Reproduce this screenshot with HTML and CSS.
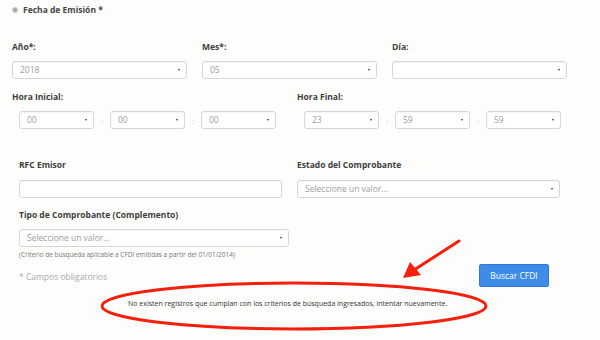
FILE: index.html
```html
<!DOCTYPE html>
<html>
<head>
<meta charset="utf-8">
<link rel="stylesheet" href="styles.css">
</head>
<body>
<div class="page">
  <div class="title"><span class="bullet"></span>Fecha de Emisión *</div>

  <div class="row3">
    <div class="field">
      <div class="label">Año*:</div>
      <div class="sel">2018<span class="caret"></span></div>
    </div>
    <div class="field">
      <div class="label">Mes*:</div>
      <div class="sel">05<span class="caret"></span></div>
    </div>
    <div class="field">
      <div class="label">Día:</div>
      <div class="sel"><span class="caret"></span></div>
    </div>
  </div>

  <div class="row2 hours">
    <div class="field">
      <div class="label">Hora Inicial:</div>
      <div class="time">
        <div class="sel small">00<span class="caret"></span></div>
        <span class="colon">:</span>
        <div class="sel small">00<span class="caret"></span></div>
        <span class="colon">:</span>
        <div class="sel small">00<span class="caret"></span></div>
      </div>
    </div>
    <div class="field">
      <div class="label">Hora Final:</div>
      <div class="time">
        <div class="sel small">23<span class="caret"></span></div>
        <span class="colon">:</span>
        <div class="sel small">59<span class="caret"></span></div>
        <span class="colon">:</span>
        <div class="sel small">59<span class="caret"></span></div>
      </div>
    </div>
  </div>

  <div class="row2 rfc">
    <div class="field indent">
      <div class="label">RFC Emisor</div>
      <div class="input"></div>
    </div>
    <div class="field">
      <div class="label">Estado del Comprobante</div>
      <div class="sel wide">Seleccione un valor...<span class="caret"></span></div>
    </div>
  </div>

  <div class="field indent tipo">
    <div class="label">Tipo de Comprobante (Complemento)</div>
    <div class="sel tipo-sel">Seleccione un valor...<span class="caret"></span></div>
    <div class="hint">(Criterio de búsqueda aplicable a CFDI emitidas a partir del 01/01/2014)</div>
  </div>

  <div class="actions">
    <span class="required">* Campos obligatorios</span>
    <button class="btn">Buscar CFDI</button>
  </div>

  <div class="message">No existen registros que cumplan con los criterios de búsqueda ingresados, intentar nuevamente.</div>
</div>

<svg class="annot" width="600" height="340" viewBox="0 0 600 340">
  <ellipse cx="294" cy="306" rx="192" ry="23" fill="none" stroke="#f5200c" stroke-width="3"/>
  <line x1="459" y1="241" x2="414" y2="270" stroke="#f5200c" stroke-width="3" stroke-linecap="round"/>
  <polygon points="403,278 410,262 421,275" fill="#f5200c"/>
</svg>
</body>
</html>
```
FILE: styles.css
```css
html, body {
  margin: 0;
  padding: 0;
  background: #fdfdfb;
}
body {
  width: 600px;
  height: 340px;
  overflow: hidden;
  position: relative;
  font-family: "Open Sans", "Liberation Sans", sans-serif;
  color: #3a3a3a;
}
.page {
  padding: 4px 0 0 12px;
  width: 555px;
}
.title {
  font-size: 8.5px;
  font-weight: 700;
  color: #444;
  line-height: 12px;
  display: flex;
  align-items: center;
}
.bullet {
  width: 4px;
  height: 4px;
  border-radius: 50%;
  background: #aaa;
  border: 1px solid #ccc;
  margin-right: 5px;
  margin-left: 0;
}
.label {
  font-size: 8.5px;
  font-weight: 700;
  color: #3d3d3d;
  line-height: 12px;
}
.row3 {
  display: grid;
  grid-template-columns: 175px 175px 175px;
  column-gap: 15px;
  margin-top: 25px;
}
.row3 .label {
  margin-bottom: 8px;
}
.sel, .input {
  position: relative;
  height: 18px;
  box-sizing: border-box;
  border: 1px solid #d6d6d6;
  border-radius: 3px;
  background: #fff;
  box-shadow: inset 0 1px 1px rgba(0,0,0,0.04);
  font-size: 8.5px;
  color: #9e9e9e;
  line-height: 16px;
  padding-left: 7px;
}
.caret {
  position: absolute;
  right: 6px;
  top: 7px;
  width: 0;
  height: 0;
  border-left: 1.5px solid transparent;
  border-right: 1.5px solid transparent;
  border-top: 2.5px solid #333;
}
.row2 {
  display: grid;
  grid-template-columns: 285px 270px;
}
.hours {
  margin-top: 12px;
}
.hours .label {
  margin-bottom: 8px;
}
.time {
  display: flex;
  align-items: center;
  padding-left: 7px;
}
.sel.small {
  width: 75px;
}
.colon {
  width: 16px;
  text-align: center;
  font-size: 8px;
  color: #ccc;
}
.rfc {
  margin-top: 30px;
}
.rfc .label {
  margin-bottom: 9px;
}
.indent {
  padding-left: 7px;
}
.input {
  width: 263px;
  height: 18px;
}
.sel.wide {
  width: 263px;
}
.tipo {
  margin-top: 11px;
}
.tipo .label {
  margin-bottom: 8px;
}
.sel.tipo-sel {
  width: 270px;
}
.hint {
  font-size: 6.5px;
  color: #777;
  margin-top: 3px;
  line-height: 10px;
}
.actions {
  display: flex;
  justify-content: space-between;
  align-items: center;
  padding-left: 7px;
  margin-top: 4px;
  width: 530px;
}
.required {
  font-size: 8.5px;
  color: #a9a9a9;
  margin-top: 1px;
}
.btn {
  width: 70px;
  height: 23px;
  background: #3c8ce8;
  border: 1px solid #2f79d2;
  border-radius: 2px;
  color: #fff;
  font-family: "Open Sans", "Liberation Sans", sans-serif;
  font-size: 8.5px;
  padding: 0;
}
.message {
  margin-top: 12px;
  font-size: 7px;
  color: #333;
  padding-left: 116px;
  line-height: 10px;
}
.annot {
  position: absolute;
  left: 0;
  top: 0;
  pointer-events: none;
}
```
